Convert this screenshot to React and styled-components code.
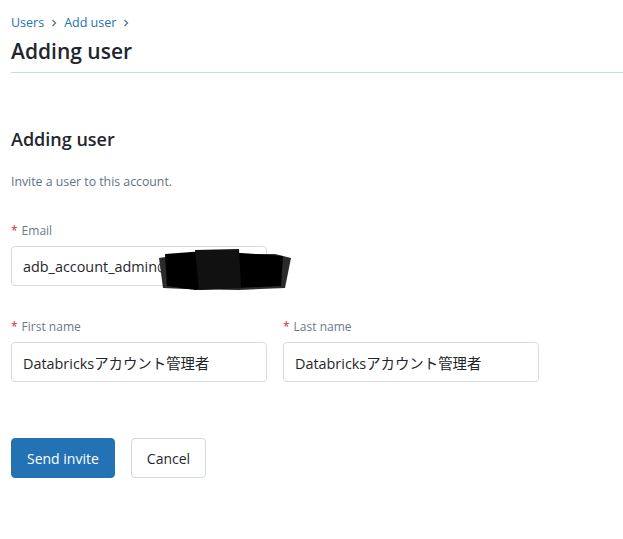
import React from "react";
import styled, { createGlobalStyle } from "styled-components";

const GlobalStyle = createGlobalStyle`
	html, body {
		margin: 0;
		padding: 0;
		background: #fff;
	}
	body {
		font-family: "Open Sans", "Noto Sans CJK JP", sans-serif;
		color: #1f272d;
	}
`;

function ChevronRight() {
	return (
		<svg width="12" height="12" viewBox="0 0 12 12" fill="none">
			<path d="M4.5 3l3 3-3 3" stroke="#5f7281" strokeWidth="1.3" />
		</svg>
	);
}

function Redaction() {
	return (
		<RedactSvg width="140" height="44" viewBox="0 0 140 44">
			<polygon points="4,10 40,4 80,6 120,6 136,10 130,40 84,42 30,41 8,40" fill="#2b2b2b" />
			<polygon points="10,6 50,3 86,5 128,8 126,38 80,40 40,42 12,38" fill="#000" />
			<polygon points="40,2 84,1 86,40 44,42" fill="#111" />
		</RedactSvg>
	);
}

function Field({ label, value, first, children }) {
	return (
		<FieldBox $first={first}>
			<Label>
				<Required>*</Required>
				{label}
			</Label>
			<InputWrap>
				<Input defaultValue={value} readOnly />
				{children}
			</InputWrap>
		</FieldBox>
	);
}

export default function App() {
	return (
		<Page>
			<GlobalStyle />
			<Header>
				<Breadcrumbs>
					<Crumb>Users</Crumb>
					<ChevronRight />
					<Crumb>Add user</Crumb>
					<ChevronRight />
				</Breadcrumbs>
				<PageTitle>Adding user</PageTitle>
			</Header>

			<Form>
				<SectionTitle>Adding user</SectionTitle>
				<Description>Invite a user to this account.</Description>

				<Field label="Email" value="adb_account_admin@" first>
					<Redaction />
				</Field>

				<Row>
					<Field label="First name" value="Databricksアカウント管理者" />
					<Field label="Last name" value="Databricksアカウント管理者" />
				</Row>

				<Actions>
					<Button $primary>Send invite</Button>
					<Button>Cancel</Button>
				</Actions>
			</Form>
		</Page>
	);
}

const Page = styled.div`
	width: 623px;
	height: 539px;
	padding-left: 11px;
	box-sizing: border-box;
	overflow: hidden;
`;

const Header = styled.div`
	padding-top: 14px;
	border-bottom: 1px solid #cbdbe6;
`;

const Breadcrumbs = styled.div`
	display: flex;
	align-items: center;
	gap: 4px;
	height: 18px;
`;

const Crumb = styled.a`
	color: #2272b4;
	font-size: 12.5px;
	line-height: 18px;
	text-decoration: none;
`;

const PageTitle = styled.h1`
	margin: 1px 0 0;
	font-size: 21px;
	font-weight: 600;
	line-height: 36px;
	height: 39px;
`;

const Form = styled.div`
	display: flex;
	flex-direction: column;
	width: 528px;
`;

const SectionTitle = styled.h2`
	margin: 54px 0 0;
	font-size: 18px;
	font-weight: 600;
	line-height: 24px;
`;

const Description = styled.p`
	margin: 22px 0 0;
	font-size: 12.3px;
	line-height: 18px;
	color: #5f7281;
`;

const FieldBox = styled.div`
	display: flex;
	flex-direction: column;
	width: 256px;
	margin-top: ${(p) => (p.$first ? "31px" : "32px")};
`;

const Row = styled.div`
	display: flex;
	gap: 16px;
`;

const Label = styled.label`
	font-size: 12px;
	line-height: 18px;
	color: #6b7a87;
	margin-bottom: 6px;
`;

const Required = styled.span`
	color: #c82d4c;
	margin-right: 4px;
`;

const InputWrap = styled.div`
	position: relative;
`;

const Input = styled.input`
	box-sizing: border-box;
	width: 100%;
	height: 40px;
	padding: 0 11px;
	border: 1px solid #d7dce0;
	border-radius: 4px;
	font-family: "Open Sans", "Noto Sans CJK JP", sans-serif;
	font-size: 14.4px;
	color: #1f272d;
	outline: none;
	background: #fff;
`;

const RedactSvg = styled.svg`
	position: absolute;
	left: 144px;
	top: 2px;
`;

const Actions = styled.div`
	display: flex;
	gap: 16px;
	margin-top: 56px;
`;

const Button = styled.button`
	height: 40px;
	padding: 0 15px;
	border-radius: 4px;
	font-family: "Open Sans", sans-serif;
	font-size: 14px;
	cursor: pointer;
	border: 1px solid ${(p) => (p.$primary ? "#2272b4" : "#d1d9e1")};
	background: ${(p) => (p.$primary ? "#2272b4" : "#fff")};
	color: ${(p) => (p.$primary ? "#fff" : "#1f272d")};
`;
